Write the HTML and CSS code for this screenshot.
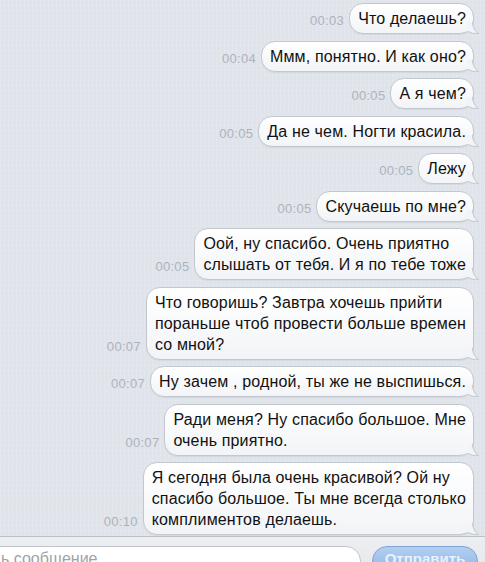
FILE: index.html
```html
<!DOCTYPE html>
<html lang="ru">
<head>
  <meta charset="UTF-8" />
  <meta name="viewport" content="width=device-width, initial-scale=1.0"/>
  <title>Диалог</title>
  <link rel="stylesheet" href="styles.css">
</head>
<body>

<div class="chat">
  <div class="msg"><span class="time">00:03</span><div class="bubble">Что делаешь?</div></div>
  <div class="msg"><span class="time">00:04</span><div class="bubble">Ммм, понятно. И как оно?</div></div>
  <div class="msg"><span class="time">00:05</span><div class="bubble">А я чем?</div></div>
  <div class="msg"><span class="time">00:05</span><div class="bubble">Да не чем. Ногти красила.</div></div>
  <div class="msg"><span class="time">00:05</span><div class="bubble">Лежу</div></div>
  <div class="msg"><span class="time">00:05</span><div class="bubble">Скучаешь по мне?</div></div>
  <div class="msg"><span class="time">00:05</span><div class="bubble">Оой, ну спасибо. Очень приятно<br>слышать от тебя. И я по тебе тоже</div></div>
  <div class="msg"><span class="time">00:07</span><div class="bubble">Что говоришь? Завтра хочешь прийти<br>пораньше чтоб провести больше времен<br>со мной?</div></div>
  <div class="msg"><span class="time">00:07</span><div class="bubble">Ну зачем , родной, ты же не выспишься.</div></div>
  <div class="msg"><span class="time">00:07</span><div class="bubble">Ради меня? Ну спасибо большое. Мне<br>очень приятно.</div></div>
  <div class="msg"><span class="time">00:10</span><div class="bubble">Я сегодня была очень красивой? Ой ну<br>спасибо большое. Ты мне всегда столько<br>комплиментов делаешь.</div></div>
</div>

<div class="toolbar">
  <div class="field">ь сообщение</div>
  <button class="send">Отправить</button>
</div>

<script>
  // tail for every bubble
  document.querySelectorAll('.bubble').forEach(b => {
    b.insertAdjacentHTML('beforeend',
      '<svg class="tail" width="12" height="12" viewBox="0 0 12 12">' +
      '<path d="M5 0 Q6 8 11.5 11.5 Q5 12 0 9 L0 0 Z" fill="#f2f4f7"/>' +
      '<path d="M5.5 0 Q6 8 11.5 11.5 Q5 12 1 9.5" fill="none" stroke="#c3c8cf" stroke-width="1"/>' +
      '</svg>');
  });
</script>

</body>
</html>
```

FILE: styles.css
```css
body {
  margin: 0;
  padding: 0;
  height: 562px;
  overflow: hidden;
  font-family: "Liberation Sans", Arial, sans-serif;
  background: #dfe3ea;
}

.chat {
  height: 536px;
  box-sizing: border-box;
  padding: 3px 11px 0 0;
  display: flex;
  flex-direction: column;
  gap: 6.5px;
  background-color: #dfe3ea;
  background-image:
    repeating-linear-gradient(90deg, rgba(255, 255, 255, 0.12) 0 1px, transparent 1px 4px),
    repeating-linear-gradient(0deg, rgba(255, 255, 255, 0.1) 0 1px, transparent 1px 5px);
}

.msg {
  display: flex;
  justify-content: flex-end;
  align-items: flex-end;
  gap: 5px;
}

.time {
  font-size: 13px;
  line-height: 15px;
  color: #adb3bc;
  margin-bottom: 6px;
  letter-spacing: 0.3px;
}

.bubble {
  position: relative;
  background: linear-gradient(#ffffff, #f2f4f7);
  border: 1px solid #c3c8cf;
  border-radius: 14px;
  padding: 4px 7px 4px 8px;
  font-size: 16px;
  line-height: 21px;
  letter-spacing: 0.15px;
  color: #111;
  box-shadow: 0 1px 1px rgba(0, 0, 0, 0.06);
}

.tail {
  position: absolute;
  right: -6px;
  bottom: -1px;
}

.toolbar {
  display: flex;
  align-items: flex-start;
  gap: 11px;
  height: 44px;
  box-sizing: border-box;
  padding: 9px 7px 0 0;
  background: linear-gradient(#eceef1, #e4e7eb);
  border-top: 1px solid #bcc1c8;
}

.field {
  flex: 1;
  margin-left: -20px;
  height: 30px;
  box-sizing: border-box;
  padding: 3px 0 0 20px;
  background: #fff;
  border: 1px solid #c1c5cb;
  border-radius: 15px;
  font-size: 16px;
  color: #9ea3aa;
}

.send {
  width: 106px;
  height: 30px;
  border: 1px solid #7ea5d6;
  border-radius: 15px;
  background: linear-gradient(#b3cff0, #8ab3e4);
  color: #e9f1fb;
  font-family: "Liberation Sans", Arial, sans-serif;
  font-size: 15px;
  font-weight: bold;
  padding: 0 0 6px;
}
```
